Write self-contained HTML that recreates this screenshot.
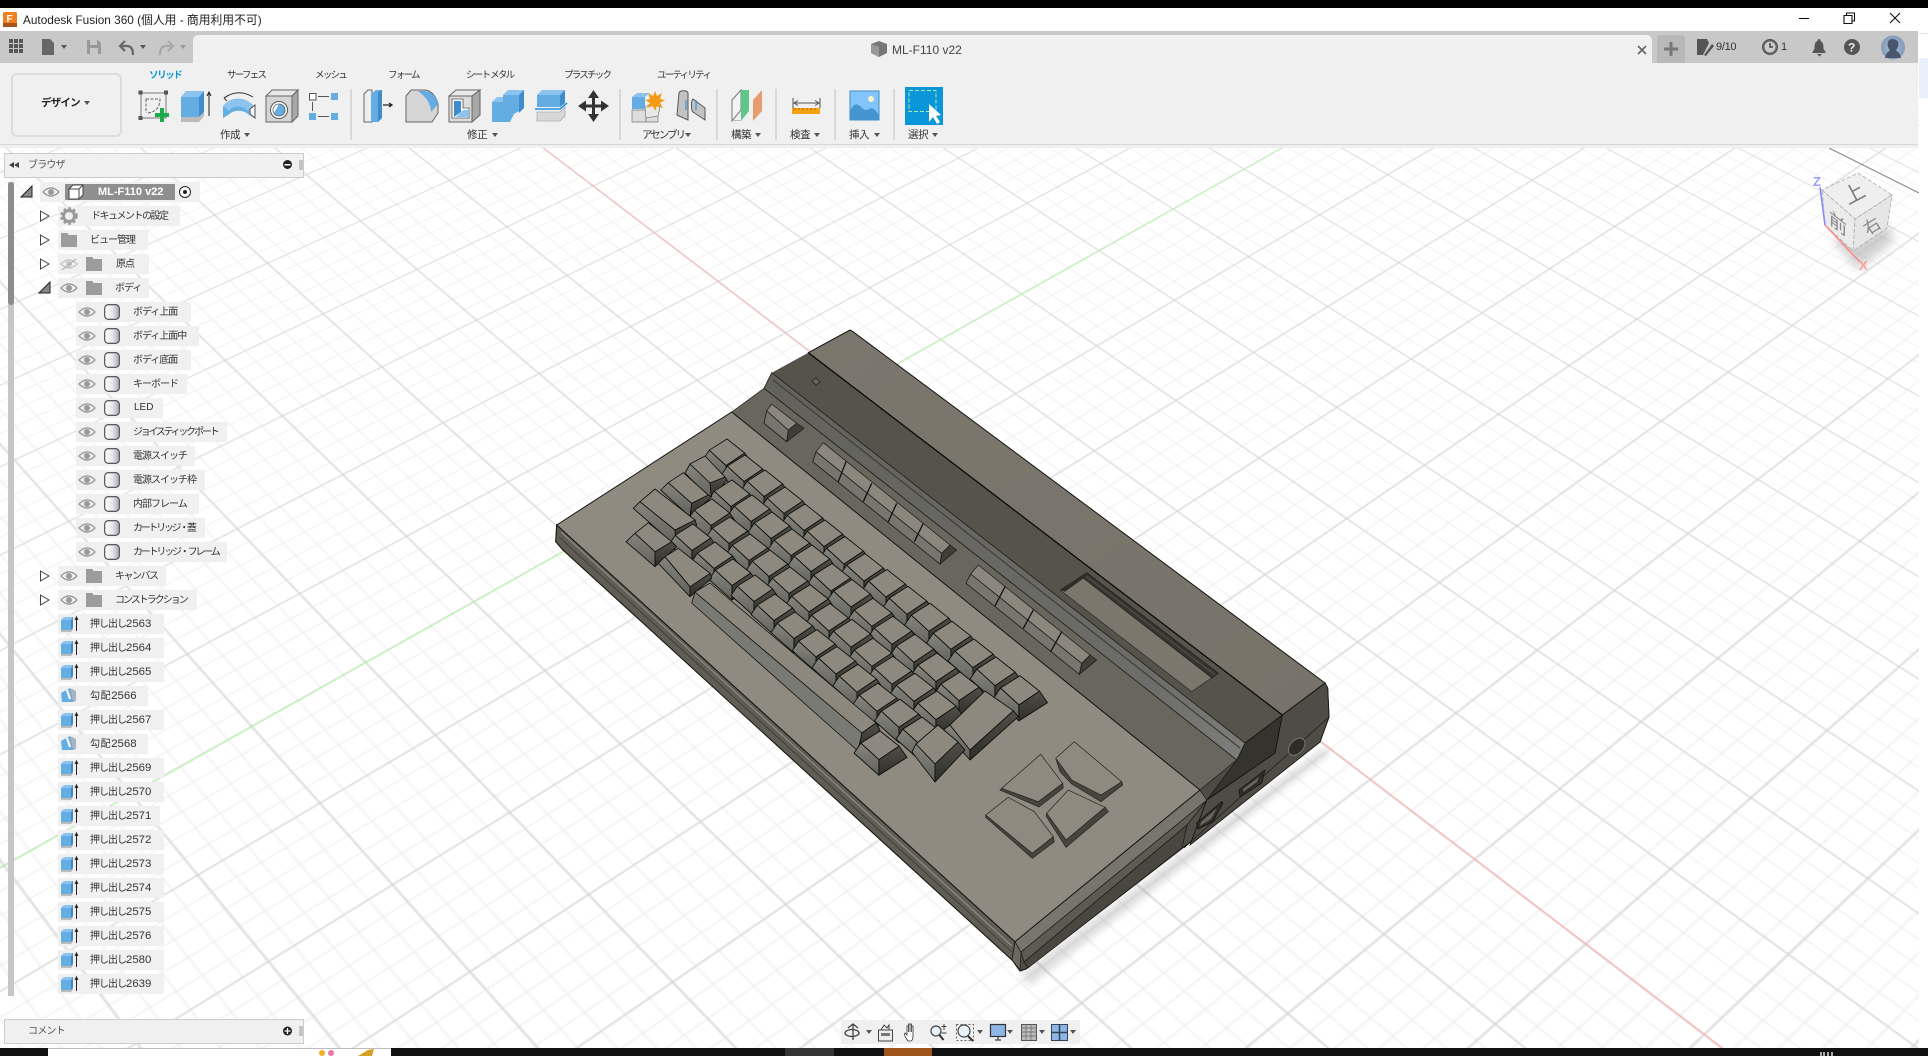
<!DOCTYPE html>
<html lang="ja"><head><meta charset="utf-8"><title>Autodesk Fusion 360</title>
<style>
html,body{margin:0;padding:0;background:#fff;width:1928px;height:1056px;overflow:hidden}
body{position:relative;font-family:"Liberation Sans","Noto Sans CJK JP",sans-serif;color:#333}
.abs{position:absolute;left:0;top:0}
#view::before{content:"";position:absolute;left:0;top:0;width:2200px;height:2200px;transform-origin:0 0;
transform:matrix3d(.506,.4548,0,-.000256,1.066,-.3964,0,.000233,0,0,1,0,-716,328.6,0,1.023);
background-image:linear-gradient(#ffa4a4,#ffa4a4),linear-gradient(#a6fb98,#a6fb98),linear-gradient(to right,#d2d2d2 1px,transparent 1px),linear-gradient(to bottom,#d2d2d2 1px,transparent 1px),linear-gradient(to right,#eeeeee 1px,transparent 1px),linear-gradient(to bottom,#eeeeee 1px,transparent 1px);
background-size:2200px .9px,.9px 2200px,100px 100px,100px 100px,20px 20px,20px 20px;
background-position:0 999.6px,999.6px 0,-.5px -.5px,-.5px -.5px,-.5px -.5px,-.5px -.5px;
background-repeat:no-repeat,no-repeat,repeat,repeat,repeat,repeat}
.b{position:absolute}
.t{position:absolute;white-space:nowrap;line-height:14px}
.tab{font-size:9.5px;letter-spacing:-1.75px;top:69px;color:#333}
.lab{font-size:10.5px;top:128px;color:#333;letter-spacing:-.4px}
.r{position:absolute;height:20px;background:#f0f0f0;font-size:10px;line-height:20px;letter-spacing:-1px;white-space:nowrap;color:#333;box-sizing:border-box}
.r.j{line-height:22px}
.r b{font:400 11.4px/20px "Liberation Sans",sans-serif;letter-spacing:0}
.kt{fill:#8d897e;stroke:#0f0f0a;stroke-width:.85;stroke-linejoin:round}
.kl{fill:url(#gl);stroke:#0f0f0a;stroke-width:.85;stroke-linejoin:round}
.kr{fill:url(#gr);stroke:#0f0f0a;stroke-width:.85;stroke-linejoin:round}
.ft{fill:#8b877c;stroke:#1a1a15;stroke-width:.7}
.ff{fill:#76756e;stroke:#1a1a15;stroke-width:.8}
.fe{fill:#3f3e38;stroke:#1a1a15;stroke-width:.7}
.sep{stroke:#111;stroke-width:1.3}
.dp{fill:#8e8a7f;stroke:#26251f;stroke-width:.7}
.ds{fill:#47453e;stroke:#26251f;stroke-width:.7}
</style></head><body>

<!-- viewport grid -->
<div id="view" class="abs" style="width:1919px;height:1048px;overflow:hidden;background:#fff">
<svg class="abs" width="1919" height="1048" viewBox="0 0 1919 1048">
<defs>
<linearGradient id="gl" x1="0" y1="0" x2="0" y2="1"><stop offset="0" stop-color="#85857e"/><stop offset="1" stop-color="#62625c"/></linearGradient>
<linearGradient id="gr" x1="0" y1="0" x2="0" y2="1"><stop offset="0" stop-color="#504f49"/><stop offset="1" stop-color="#2f2e2a"/></linearGradient>
<linearGradient id="strip" x1="0" y1="0" x2="1" y2="1"><stop offset="0" stop-color="#62615b"/><stop offset=".8" stop-color="#6c6c6a"/><stop offset="1" stop-color="#7e7e7c"/></linearGradient>
<linearGradient id="plate" x1="0" y1="0" x2="1" y2="1"><stop offset="0" stop-color="#7b776d"/><stop offset="1" stop-color="#77736a"/></linearGradient>
<filter id="bl" x="-20%" y="-20%" width="140%" height="140%"><feGaussianBlur stdDeviation="3.5"/></filter>
<filter id="bl2" x="-40%" y="-40%" width="180%" height="180%"><feGaussianBlur stdDeviation="5"/></filter>
<g id="k">
<polygon class="kl" points="-17.7,-1.8 -1,13.5 -1,28 -24,7.5"/>
<polygon class="kr" points="-1,13.5 17.7,1 25,11.5 -1,28"/>
<polygon class="kt" points="-17.7,-1.8 0,-13 17.7,1 -1,13.5"/>
</g>
</defs>

<!-- far boundary line -->
<line x1="1829" y1="148" x2="1919" y2="193" stroke="#8a8a8a" stroke-width="1.2"/>

<!-- shadow -->
<polygon points="1020,974 1322,748 1332,752 1030,986" fill="#000" opacity=".12" filter="url(#bl)"/>

<!-- side walls -->
<polygon points="556.7,525 555.7,541.7 563,550 1012,960 1020,971 1026,969 1320,742 1329,717 1327.7,688 1325,683 1282,715 1200,790 1015,941.7" fill="#4f4d45" stroke="#111" stroke-width="1"/>
<polygon points="556.7,525 555.7,541.7 563,550 1012,960 1015,941.7" fill="#5f5d54" stroke="#161611" stroke-width="1"/>
<line x1="561" y1="532" x2="1012" y2="946" stroke="#8d8b80" stroke-width="1.2"/>
<line x1="559" y1="537" x2="1012" y2="952" stroke="#3a3933" stroke-width=".8"/>
<!-- front-right band -->
<polygon points="1015,941.7 1200,790 1207,800 1021,952" fill="#78766c" stroke="#1a1a15" stroke-width=".7"/>
<polygon points="1021,952 1207,800 1187,825 1024,962" fill="#5c5a51" stroke="#1a1a15" stroke-width=".7"/>
<polygon points="1024,962 1187,825 1182,848 1028,968" fill="#49473f" stroke="#1a1a15" stroke-width=".7"/>
<polygon points="1015,941.7 1021,952 1020,970 1012,960" fill="#6b695f" stroke="#1a1a15" stroke-width=".7"/>
<!-- right block wall -->
<polygon points="1282.3,715 1325,683 1327.7,688 1329,717 1320,742 1190,845 1206.7,800 1275,753" fill="#4e4c44" stroke="#111" stroke-width=".8"/>
<line x1="1184" y1="848" x2="1329" y2="717" stroke="#1b1b16" stroke-width=".7"/>

<!-- top plate -->
<polygon points="808.3,352.7 850,330 853,331.7 1325,683 1282.3,715" fill="url(#plate)" stroke="#14140f" stroke-width="1"/>
<!-- dark band -->
<polygon points="771.7,372.7 808.3,352.7 1282.3,715 1245,743" fill="#56534b"/>
<line x1="808.3" y1="352.7" x2="1282.3" y2="715" stroke="#0c0c08" stroke-width="1.3"/>
<!-- end face of dark band -->
<polygon points="1245,743 1282.3,715 1275,753 1206.7,800 1236.7,760" fill="#35332d" stroke="#111" stroke-width=".8"/>
<!-- strip -->
<polygon points="764,388.3 771.7,372.7 1245,743 1236.7,760" fill="url(#strip)" stroke="#1c1c17" stroke-width=".8"/>
<line x1="773" y1="380" x2="1240" y2="748" stroke="#3f3e38" stroke-width="1.2"/>
<!-- mid band -->
<polygon points="731.7,412 764,388.3 1236.7,760 1200,790" fill="#69665d" stroke="#1c1c17" stroke-width=".7"/>
<!-- main plane -->
<polygon points="556.7,525 731.7,412 1200,790 1015,941.7" fill="#8f8b80" stroke="#14140f" stroke-width="1"/>
<polygon points="1200,790 1236.7,760 1206.7,800" fill="#4d4b43" stroke="#1c1c17" stroke-width=".6"/>

<!-- LED -->
<polygon points="812,381 816,378 820,382 816,385" fill="#6a675f" stroke="#1a1a15" stroke-width=".7"/>

<!-- cartridge slot -->
<polygon points="1060,590 1086.7,572.7 1218.3,673.3 1191.7,691.7" fill="#7b776d" stroke="#2b2a24" stroke-width=".7"/>
<polygon points="1086.7,572.7 1218.3,673.3 1212,678 1083,578" fill="#37352f" stroke="#1a1a15" stroke-width=".6"/>
<line x1="1086" y1="576" x2="1215" y2="675" stroke="#5a584f" stroke-width=".8"/>
<polygon points="1060,590 1086.7,572.7 1084,578 1065,591.7" fill="#2e2d28"/>

<!-- single function key -->
<polygon class="fe" points="796.7,423.3 804,428.3 786.7,441.7 788.3,430"/>
<polygon class="ff" points="766.7,410.7 788.3,430 786.7,441.7 764,423.3"/>
<polygon class="ft" points="771.7,404 796.7,423.3 788.3,430 766.7,410.7"/>

<!-- function group 1 -->
<polygon class="fe" points="950,545 956.7,550 940,564 941.7,553.3"/>
<polygon class="ff" points="816,451.7 941.7,553.3 940,564 812.7,461.7"/>
<polygon class="ft" points="823.3,442.7 950,545 941.7,553.3 816,451.7"/>
<line class="sep" x1="846" y1="461.7" x2="838.3" y2="481.7"/><line class="sep" x1="871.7" y1="483.3" x2="863.3" y2="501.7"/><line class="sep" x1="896.7" y1="503.3" x2="888.3" y2="521.7"/><line class="sep" x1="923.3" y1="523.3" x2="914.3" y2="541.7"/>
<!-- function group 2 -->
<polygon class="fe" points="1090,655 1096.7,660 1079.3,674.3 1081.7,663.3"/>
<polygon class="ff" points="970.7,574 1081.7,663.3 1079.3,674.3 966,583.3"/>
<polygon class="ft" points="978.3,565 1090,655 1081.7,663.3 970.7,574"/>
<line class="sep" x1="1005" y1="586.7" x2="995" y2="606"/><line class="sep" x1="1033.3" y1="610" x2="1023.3" y2="628.3"/><line class="sep" x1="1061.7" y1="631.7" x2="1050.7" y2="651.7"/>

<!-- Row 1 -->
<use href="#k" transform="translate(727 452)"/><use href="#k" transform="translate(745 468)"/><use href="#k" transform="translate(765 483)"/><use href="#k" transform="translate(785 500)"/><use href="#k" transform="translate(805 517)"/><use href="#k" transform="translate(825 533)"/><use href="#k" transform="translate(845 550) scale(1.04)"/><use href="#k" transform="translate(865 567) scale(1.04)"/><use href="#k" transform="translate(887 583) scale(1.04)"/><use href="#k" transform="translate(908 600) scale(1.06)"/><use href="#k" transform="translate(930 617) scale(1.06)"/><use href="#k" transform="translate(952 635) scale(1.06)"/><use href="#k" transform="translate(974 653) scale(1.08)"/><use href="#k" transform="translate(996 671) scale(1.08)"/><use href="#k" transform="translate(1020 690) scale(1.1)"/>
<!-- Row 2 -->
<polygon class="kl" points="690,464 710,483 711.7,500 685,473"/><polygon class="kr" points="710,483 725,477 727,480 711.7,500"/><polygon class="kt" points="690,464 705,456 725,477 710,483"/>
<use href="#k" transform="translate(732 493)"/><use href="#k" transform="translate(752 508)"/><use href="#k" transform="translate(772 525)"/><use href="#k" transform="translate(792 542)"/><use href="#k" transform="translate(812 558)"/><use href="#k" transform="translate(832 577) scale(1.04)"/><use href="#k" transform="translate(852 593) scale(1.04)"/><use href="#k" transform="translate(873 612) scale(1.06)"/><use href="#k" transform="translate(893 630) scale(1.06)"/><use href="#k" transform="translate(915 648) scale(1.06)"/><use href="#k" transform="translate(937 667) scale(1.08)"/><use href="#k" transform="translate(960 686) scale(1.08)"/>
<!-- Row 3 -->
<polygon class="kl" points="668.3,482.7 691.7,503.3 690,516.7 660.7,490"/><polygon class="kr" points="691.7,503.3 708.3,495 711.7,496.7 690,516.7"/><polygon class="kt" points="668.3,482.7 683.3,472.7 708.3,495 691.7,503.3"/>
<use href="#k" transform="translate(712 512)"/><use href="#k" transform="translate(730 530)"/><use href="#k" transform="translate(750 547)"/><use href="#k" transform="translate(770 563)"/><use href="#k" transform="translate(790 580)"/><use href="#k" transform="translate(810 598) scale(1.03)"/><use href="#k" transform="translate(830 617) scale(1.04)"/><use href="#k" transform="translate(852 633) scale(1.05)"/><use href="#k" transform="translate(873 652) scale(1.06)"/><use href="#k" transform="translate(893 670) scale(1.06)"/><use href="#k" transform="translate(915 687) scale(1.06)"/><use href="#k" transform="translate(937 705) scale(1.08)"/>
<!-- Enter -->
<polygon class="kl" points="950,725 970,750 970,760 943,730"/><polygon class="kr" points="970,750 1013.3,710.7 1018.3,716.7 970,760"/><polygon class="kt" points="950,725 985,691 1013.3,710.7 970,750"/>
<!-- Row 4 -->
<polygon class="kl" points="640,501.7 675,530 676.7,546.7 633.3,508.3"/><polygon class="kr" points="675,530 695,520 696.7,525 676.7,546.7"/><polygon class="kt" points="640,501.7 655,489 695,520 675,530"/>
<use href="#k" transform="translate(693 537)"/><use href="#k" transform="translate(715 555)"/><use href="#k" transform="translate(733 572)"/><use href="#k" transform="translate(755 588)"/><use href="#k" transform="translate(775 607)"/><use href="#k" transform="translate(795 625)"/><use href="#k" transform="translate(817 643) scale(1.03)"/><use href="#k" transform="translate(837 660) scale(1.04)"/><use href="#k" transform="translate(858 678) scale(1.05)"/><use href="#k" transform="translate(878 697) scale(1.06)"/><use href="#k" transform="translate(900 713) scale(1.06)"/><use href="#k" transform="translate(922 731) scale(1.08)"/>
<!-- Row 5 -->
<polygon class="kl" points="635,533.3 655,551.7 655,566.7 626,541.7"/><polygon class="kr" points="655,551.7 671.7,541.7 676.7,546.7 655,566.7"/><polygon class="kt" points="635,533.3 648.3,522.7 671.7,541.7 655,551.7"/>
<polygon class="kl" points="665,556.7 690,586.7 690,596.7 658.3,563.3"/><polygon class="kr" points="690,586.7 710,573.3 711.7,578.3 690,596.7"/><polygon class="kt" points="665,556.7 678.3,548.3 710,573.3 690,586.7"/>
<!-- space bar -->
<polygon points="695,592 862,733 858,751 691.7,603" fill="#7a7a74" stroke="#16160f" stroke-width=".8"/>
<polygon points="710,583 876,723 862,733 695,592" fill="#8c887d" stroke="#16160f" stroke-width=".8"/>
<polygon class="kr" points="862,733 876,723 880,730 858,751"/>
<use href="#k" transform="translate(880 745) scale(1.08)"/>
<polygon class="kl" points="916,744 935,764 935,782 912,752"/><polygon class="kr" points="935,764 958,742 965,750 935,782"/><polygon class="kt" points="916,744 938,725 958,742 935,764"/>

<!-- D pad -->
<polygon class="ds" points="1001.7,788.3 1038.3,801.7 1062.7,783.3 1063.3,788 1039,807 1000,790"/><polygon class="dp" points="1001.7,788.3 1040.7,754.3 1062.7,783.3 1038.3,801.7"/>
<polygon class="ds" points="1055.7,758.3 1071.7,780 1101,795 1121.7,781.7 1122.7,785 1101,801.7 1071.7,784 1060,771.7"/><polygon class="dp" points="1055.7,758.3 1074.3,741.7 1121.7,781.7 1101,795 1071.7,780"/>
<polygon class="ds" points="985.7,815 1032.3,853.3 1053.3,836.7 1054.3,841.7 1032.3,858.3 985.7,817.3"/><polygon class="dp" points="985.7,815 1008.3,797.3 1034.3,811.7 1053.3,836.7 1032.3,853.3"/>
<polygon class="ds" points="1046.7,813.3 1066,840 1105,807.3 1108.3,811.7 1066,847.3 1046,816"/><polygon class="dp" points="1046.7,813.3 1068.3,790 1105,807.3 1066,840"/>

<!-- ports -->
<polygon points="1196.7,823 1221.7,801.7 1223,803 1213,821.7 1198,829" fill="#2e2d27" stroke="#111" stroke-width=".7"/>
<polygon points="1201,822 1217,808 1211,819 1200,826" fill="#67655c"/>
<polygon points="1239,790 1265,770 1261.7,783 1240,797" fill="#2e2d27" stroke="#111" stroke-width=".7"/>
<polygon points="1243,789 1259,777 1257,782 1243,792" fill="#67655c"/>
<ellipse cx="1296.7" cy="746.7" rx="10" ry="6.5" transform="rotate(-48 1296.7 746.7)" fill="#2e2d27" stroke="#77756b"/>

<!-- view cube -->
<polygon points="1833,240 1880,215 1895,240 1858,270" fill="#000" opacity=".18" filter="url(#bl2)"/>
<polygon points="1858,173 1892,195 1855,219 1822,190" fill="#efefef" stroke="#aaa" stroke-dasharray="4 2" stroke-width=".8"/>
<polygon points="1822,190 1855,219 1853,251 1825,225" fill="#ebebeb" stroke="#aaa" stroke-dasharray="4 2" stroke-width=".8"/>
<polygon points="1892,195 1855,219 1853,251 1887,228" fill="#e6e6e6" stroke="#aaa" stroke-dasharray="4 2" stroke-width=".8"/>
<text x="1844" y="200" font-size="21" fill="#7c7c7c" transform="rotate(-28 1856 194)" font-family="'Noto Sans CJK JP',sans-serif">上</text>
<text x="1829" y="228" font-size="18" fill="#858585" transform="skewY(38) translate(0 -1434) " font-family="'Noto Sans CJK JP',sans-serif">前</text>
<text x="1863" y="233" font-size="17" fill="#858585" font-family="'Noto Sans CJK JP',sans-serif" transform="rotate(-32 1870 226)">右</text>
<line x1="1825" y1="225" x2="1820" y2="187" stroke="#8a8aff" stroke-width="1.6"/>
<line x1="1825" y1="225" x2="1860" y2="262" stroke="#ff8a8a" stroke-width="1.6"/>
<text x="1813" y="186" font-size="13" font-weight="700" fill="#9a9aff" font-family="Liberation Sans,sans-serif">Z</text>
<text x="1859" y="270" font-size="13" font-weight="700" fill="#ff9a9a" font-family="Liberation Sans,sans-serif">X</text>
</svg>
</div>

<!-- chrome backgrounds -->
<div class="b" style="left:0;top:0;width:1928px;height:8px;background:#000"></div>
<div class="b" style="left:0;top:8px;width:1928px;height:23px;background:#fff"></div>
<div class="b" style="left:0;top:31px;width:1918px;height:32px;background:#c8c8c8"></div>
<div class="b" style="left:193px;top:35px;width:1459px;height:30px;background:#f0f0f0;border-radius:5px 5px 0 0"></div>
<div class="b" style="left:1657px;top:35px;width:28px;height:28px;background:#b8b8b8;border-radius:4px 4px 0 0"></div>
<div class="b" style="left:0;top:63px;width:1918px;height:85px;background:#f0f0f0"></div>
<div class="b" style="left:0;top:144px;width:1918px;height:1px;background:#d6d6d6"></div>
<div class="b" style="left:1919px;top:8px;width:9px;height:1040px;background:#fff"></div>
<div class="b" style="left:1919px;top:33px;width:9px;height:1px;background:#ddd"></div>
<div class="b" style="left:1919px;top:58px;width:9px;height:40px;background:#e9effb"></div>
<div class="b" style="left:11px;top:73px;width:107px;height:60px;border:2px solid #dcdcdc;border-radius:6px"></div>

<!-- title -->
<div class="t" style="left:23px;top:13px;font-size:11.8px;color:#222">Autodesk Fusion 360 (個人用 - 商用利用不可)</div>
<div class="t" style="left:892px;top:43px;font-size:12px;color:#444">ML-F110 v22</div>
<div class="t" style="left:1716px;top:40px;font-size:11px;letter-spacing:-.3px;color:#333">9/10</div>
<div class="t" style="left:1781px;top:40px;font-size:11px;color:#333">1</div>
<div class="t" style="left:41px;top:96px;font-size:10.5px;font-weight:700;letter-spacing:-.8px;color:#222">デザイン</div>

<!-- ribbon tabs -->
<div class="t tab" style="left:149px;color:#0696d7;font-weight:700;letter-spacing:-1.4px">ソリッド</div>
<div class="t tab" style="left:227px">サーフェス</div>
<div class="t tab" style="left:315px">メッシュ</div>
<div class="t tab" style="left:388px">フォーム</div>
<div class="t tab" style="left:466px">シート&nbsp;メタル</div>
<div class="t tab" style="left:564px">プラスチック</div>
<div class="t tab" style="left:657px">ユーティリティ</div>

<div class="t lab" style="left:220px">作成</div>
<div class="t lab" style="left:467px">修正</div>
<div class="t lab" style="left:642px;letter-spacing:-2px">アセンブリ</div>
<div class="t lab" style="left:731px">構築</div>
<div class="t lab" style="left:790px">検査</div>
<div class="t lab" style="left:849px">挿入</div>
<div class="t lab" style="left:908px">選択</div>

<!-- browser panel -->
<div class="b" style="left:4px;top:153px;width:298px;height:23px;background:#f0f0f0;border:1px solid #ccc"></div>
<div class="t" style="left:28px;top:159px;font-size:10px;letter-spacing:-.8px;color:#555">ブラウザ</div>
<div class="b" style="left:4px;top:1019px;width:298px;height:23px;background:#f0f0f0;border:1px solid #ccc"></div>
<div class="t" style="left:28px;top:1025px;font-size:10px;letter-spacing:-.8px;color:#555">コメント</div>
<div class="b" style="left:8px;top:182px;width:6px;height:814px;background:#c6c6c6"></div>
<div class="b" style="left:8px;top:182px;width:6px;height:123px;background:#8c8c8c;border-radius:3px"></div>

<!-- tree rows -->
<div class="r" style="left:40px;top:182px;width:160px"></div>
<div class="b" style="left:65px;top:184px;width:110px;height:16px;background:#8f8f8f"></div>
<div class="t" style="left:98px;top:185px;font-size:11px;font-weight:700;color:#fff">ML-F110 v22</div>
<div class="r j" style="left:58px;top:206px;width:122px;padding-left:33px;letter-spacing:-1.5px">ドキュメントの設定</div>
<div class="r j" style="left:58px;top:230px;width:90px;padding-left:32px">ビュー管理</div>
<div class="r j" style="left:58px;top:254px;width:91px;padding-left:58px">原点</div>
<div class="r j" style="left:58px;top:278px;width:91px;padding-left:57px">ボディ</div>
<div class="r j" style="left:76px;top:302px;width:115px;padding-left:57px">ボディ上面</div>
<div class="r j" style="left:76px;top:326px;width:123px;padding-left:57px">ボディ上面中</div>
<div class="r j" style="left:76px;top:350px;width:115px;padding-left:57px">ボディ底面</div>
<div class="r j" style="left:76px;top:374px;width:111px;padding-left:57px">キーボード</div>
<div class="r" style="left:76px;top:398px;width:87px;padding-left:58px"><b style="font-size:10px">LED</b></div>
<div class="r j" style="left:76px;top:422px;width:151px;padding-left:57px;letter-spacing:-2.3px">ジョイスティック ポート</div>
<div class="r j" style="left:76px;top:446px;width:119px;padding-left:57px">電源スイッチ</div>
<div class="r j" style="left:76px;top:470px;width:129px;padding-left:57px">電源スイッチ枠</div>
<div class="r j" style="left:76px;top:494px;width:123px;padding-left:57px">内部フレーム</div>
<div class="r j" style="left:76px;top:518px;width:129px;padding-left:57px;letter-spacing:-2.3px">カートリッジ・蓋</div>
<div class="r j" style="left:76px;top:542px;width:151px;padding-left:57px;letter-spacing:-2.2px">カートリッジ・フレーム</div>
<div class="r j" style="left:58px;top:566px;width:108px;padding-left:57px;letter-spacing:-1.5px">キャンバス</div>
<div class="r j" style="left:58px;top:590px;width:139px;padding-left:57px;letter-spacing:-2px">コンストラクション</div>
<div class="r" style="left:58px;top:614px;width:106px;padding-left:32px">押し出し<b>2563</b></div>
<div class="r" style="left:58px;top:638px;width:106px;padding-left:32px">押し出し<b>2564</b></div>
<div class="r" style="left:58px;top:662px;width:106px;padding-left:32px">押し出し<b>2565</b></div>
<div class="r" style="left:58px;top:686px;width:90px;padding-left:32px;letter-spacing:.6px">勾配<b>2566</b></div>
<div class="r" style="left:58px;top:710px;width:106px;padding-left:32px">押し出し<b>2567</b></div>
<div class="r" style="left:58px;top:734px;width:90px;padding-left:32px;letter-spacing:.6px">勾配<b>2568</b></div>
<div class="r" style="left:58px;top:758px;width:106px;padding-left:32px">押し出し<b>2569</b></div>
<div class="r" style="left:58px;top:782px;width:106px;padding-left:32px">押し出し<b>2570</b></div>
<div class="r" style="left:58px;top:806px;width:102px;padding-left:32px">押し出し<b>2571</b></div>
<div class="r" style="left:58px;top:830px;width:106px;padding-left:32px">押し出し<b>2572</b></div>
<div class="r" style="left:58px;top:854px;width:106px;padding-left:32px">押し出し<b>2573</b></div>
<div class="r" style="left:58px;top:878px;width:106px;padding-left:32px">押し出し<b>2574</b></div>
<div class="r" style="left:58px;top:902px;width:106px;padding-left:32px">押し出し<b>2575</b></div>
<div class="r" style="left:58px;top:926px;width:106px;padding-left:32px">押し出し<b>2576</b></div>
<div class="r" style="left:58px;top:950px;width:106px;padding-left:32px">押し出し<b>2580</b></div>
<div class="r" style="left:58px;top:974px;width:106px;padding-left:32px">押し出し<b>2639</b></div>

<!-- nav bar -->
<div class="b" style="left:841px;top:1020px;width:239px;height:24px;background:#f0f0f0"></div>

<!-- taskbar -->
<div class="b" style="left:0;top:1048px;width:1928px;height:8px;background:#111"></div>
<div class="b" style="left:48px;top:1048px;width:343px;height:8px;background:#fff;border-top:1px solid #bbb;box-sizing:border-box"></div>
<div class="b" style="left:785px;top:1048px;width:49px;height:8px;background:#333"></div>
<div class="b" style="left:884px;top:1048px;width:48px;height:8px;background:#9c5418"></div>

<!-- icon layer -->
<svg class="abs" width="1928" height="1056" viewBox="0 0 1928 1056" style="pointer-events:none">
<defs>
<linearGradient id="bd" x1="0" y1="0" x2="1" y2="0"><stop offset="0" stop-color="#fff"/><stop offset=".55" stop-color="#e6e6ea"/><stop offset="1" stop-color="#a5a8b4"/></linearGradient>
<radialGradient id="av" cx=".5" cy=".5" r=".6"><stop offset="0" stop-color="#a9bdd8"/><stop offset="1" stop-color="#7d93b3"/></radialGradient>
<g id="eye"><path d="M0 5Q8 -3 16 5Q8 13 0 5Z" fill="none" stroke="#9a9a9a" stroke-width="1.3"/><circle cx="8" cy="5" r="3" fill="#9a9a9a"/></g>
<g id="body"><rect x=".7" y=".7" width="14.6" height="14.6" rx="3.5" fill="url(#bd)" stroke="#444" stroke-width="1.1"/></g>
<g id="folder"><path d="M0 0h6l2 2h8v12H0z" fill="#9c9c9c"/></g>
<g id="ex"><polygon points="0,4 3,1 12,1 12,12 10,14 0,14" fill="#64ade3"/><polygon points="0,4 3,1 12,1 10,4" fill="#8cc4ef"/><polygon points="10,4 12,1 12,12 10,14" fill="#3e8ccb"/><polygon points="0,14 10,14 12,12 12,14 10,16 0,16" fill="#bbb"/><path d="M15.5 15V2M14 4l1.5-3 1.5 3" fill="none" stroke="#222" stroke-width="1"/></g>
<g id="dr"><polygon points="0,5 9,0 13,5 12,14 1,14" fill="#64ade3"/><path d="M6 2l3 9" stroke="#fff" stroke-width="2"/><polygon points="9,0 15,3 15,13 12,14" fill="#aab4c0"/></g>
<polygon id="dn" points="0,0 6,0 3,4" fill="#555"/>
</defs>

<!-- title bar icons -->
<rect x="3" y="12" width="14" height="15" rx="1.5" fill="#f08020"/><rect x="3" y="23" width="14" height="4" fill="#a85518"/>
<text x="6.5" y="22" font-size="10" font-weight="700" fill="#fff" font-family="Liberation Sans,sans-serif">F</text>
<path d="M1799 18.5h10" stroke="#111" stroke-width="1.1"/>
<path d="M1844 15.5h8v8h-8zM1846.5 15.5v-2.5h8v8h-2.5" fill="none" stroke="#111" stroke-width="1.1"/>
<path d="M1890 13l10 10M1900 13l-10 10" stroke="#111" stroke-width="1.1"/>

<!-- quick access -->
<g fill="#555"><rect x="9" y="39" width="4" height="4"/><rect x="14" y="39" width="4" height="4"/><rect x="19" y="39" width="4" height="4"/><rect x="9" y="44" width="4" height="4"/><rect x="14" y="44" width="4" height="4"/><rect x="19" y="44" width="4" height="4"/><rect x="9" y="49" width="4" height="4"/><rect x="14" y="49" width="4" height="4"/><rect x="19" y="49" width="4" height="4"/></g>
<path d="M42 39h8l4 4v12H42z" fill="#666"/><use href="#dn" x="61" y="45"/>
<path d="M87 40h11l3 3v11H87z" fill="#999"/><rect x="90" y="40" width="7" height="5" fill="#c8c8c8"/><rect x="90" y="48" width="8" height="6" fill="#c8c8c8"/>
<path d="M125 41l-5 5 5 5M120 46h7c4 0 6 3 6 9" fill="none" stroke="#666" stroke-width="2.2"/><use href="#dn" x="140" y="45"/>
<path d="M168 41l5 5-5 5M173 46h-7c-4 0-6 3-6 9" fill="none" stroke="#a8a8a8" stroke-width="2.2"/><polygon points="180,45 186,45 183,49" fill="#999"/>

<polygon points="871,44 879,41 887,44 887,53 879,57 871,53" fill="#777"/><polygon points="871,44 879,47 879,57 871,53" fill="#9a9a9a"/>
<path d="M1638 46l8 8M1646 46l-8 8" stroke="#666" stroke-width="1.6"/>
<path d="M1671 42v14M1664 49h14" stroke="#777" stroke-width="3"/>
<path d="M1697 39h10l2 4-6 12h-6z" fill="#555"/><path d="M1704 55l8-11 2 2-8 10z" fill="#555"/>
<circle cx="1770" cy="47" r="7.5" fill="#666" stroke="#555"/><circle cx="1770" cy="47" r="5.5" fill="#ccc"/><path d="M1770 43v4h3" stroke="#444" stroke-width="1.5" fill="none"/>
<path d="M1819 39c1 0 1.500 1 1.500 2 3 1 3 5 3 8l2 3v1h-13v-1l2-3c0-3 0-7 3-8 0-1 .5-2 1.500-2z" fill="#555"/><path d="M1817 54h5l-2.500 2.500z" fill="#555"/>
<circle cx="1852" cy="47" r="8" fill="#555"/><text x="1848" y="51.500" font-size="12" font-weight="700" fill="#eee" font-family="Liberation Sans,sans-serif">?</text>
<ellipse cx="1893" cy="47.500" rx="12" ry="12" fill="url(#av)"/><path d="M1885 58c1-6 4-6 5-8-2-2-3-5-2-8 1-4 8-4 10 0 1 3 0 6-2 8 1 2 4 2 5 8z" fill="#4a566e"/>

<use href="#dn" x="84" y="101"/>

<!-- sketch -->
<rect x="141" y="93" width="25" height="25" fill="none" stroke="#777" stroke-width="1"/><g fill="#555"><rect x="138.500" y="90.500" width="4" height="4"/><rect x="164" y="90.500" width="4" height="4"/><rect x="138.500" y="116" width="4" height="4"/></g>
<path d="M146 99h14c0 8-4 13-12 14M146 99v14" fill="none" stroke="#666" stroke-dasharray="3 1.500"/>
<path d="M162 108v14M155 115h14" stroke="#1ea94a" stroke-width="4"/>
<!-- extrude -->
<polygon points="181,97 199,97 199,117 181,117" fill="#64ade3"/><polygon points="181,97 186,91 204,91 199,97" fill="#8cc4ef"/><polygon points="199,97 204,91 204,112 199,117" fill="#3e8ccb"/><polygon points="181,117 199,117 204,112 204,116 199,122 181,122" fill="#bbb"/>
<path d="M209 116V92M207 96l2-4 2 4" fill="none" stroke="#222" stroke-width="1"/>
<!-- revolve -->
<path d="M223 107C229 96 247 96 254 107L254 118 248 114C242 109 233 110 228 115L223 118Z" fill="#64ade3"/><path d="M223 106C230 97 246 97 254 106L248 111C242 105 233 105 229 111Z" fill="#8cc4ef"/><polygon points="250,109 255,105 255,118 250,114" fill="#f4f4f4" stroke="#555"/>
<path d="M224 98Q238 88 253 97" fill="none" stroke="#333"/><path d="M224 98l5-3M224 98l3 3" stroke="#333"/>
<!-- hole -->
<polygon points="266,96 292,96 292,122 266,122" fill="#d5d5d5" stroke="#666"/><polygon points="266,96 272,90 298,90 292,96" fill="#e9e9e9" stroke="#666"/><polygon points="292,96 298,90 298,116 292,122" fill="#a8a8a8" stroke="#666"/>
<circle cx="279" cy="110" r="8.500" fill="#fff" stroke="#555"/><path d="M279 104a6 6 0 1 1-5 9z" fill="#64ade3"/><circle cx="279" cy="110" r="6" fill="none" stroke="#555" stroke-width=".8"/>
<!-- pattern -->
<rect x="309.500" y="93.500" width="6.500" height="6.500" fill="#fff" stroke="#555"/><rect x="331" y="93" width="7" height="7" fill="#64ade3"/><rect x="309" y="113" width="7" height="7" fill="#64ade3"/><rect x="331" y="113" width="7" height="7" fill="#64ade3"/>
<path d="M318 96.500h11M312.500 102v9M318 116.500h11" stroke="#555"/>
<line x1="351" y1="89" x2="351" y2="140" stroke="#d8d8d8" stroke-width="2"/>
<!-- press pull -->
<polygon points="364,94 368,90 372,90 372,122 364,122" fill="#eee" stroke="#666"/><polygon points="371,122 371,94 376,90 382,90 382,118 378,122" fill="#64ade3"/><polygon points="378,122 378,92 382,90 382,118" fill="#3e8ccb"/>
<path d="M383 105h9M389 103l3 2-3 2" fill="none" stroke="#222" stroke-width="1.300"/>
<!-- fillet -->
<path d="M406 96l5-6h13c7 0 12 6 14 14v9l-6 9h-26z" fill="#d5d5d5" stroke="#666"/><path d="M418 91h6c7 0 13 6 14 13l-7 8c0-9-6-16-13-21z" fill="#64ade3"/>
<!-- chamfer -->
<polygon points="449,96 472,96 472,122 449,122" fill="#ddd" stroke="#666"/><polygon points="449,96 456,90 480,90 472,96" fill="#e9e9e9" stroke="#666"/><polygon points="472,96 480,90 480,115 472,122" fill="#a8a8a8" stroke="#666"/>
<polygon points="452,99 463,99 463,108 469,108 469,118 452,118" fill="#fff" stroke="#555" stroke-width=".8"/><polygon points="454,101 461,101 461,112 454,117" fill="#3e8ccb"/><polygon points="456,117 463,110 469,110 469,117" fill="#8cc4ef"/>
<!-- combine -->
<polygon points="492,102 510,102 510,122 492,122" fill="#64ade3"/><polygon points="492,102 497,97 503,97 503,102" fill="#8cc4ef"/><polygon points="503,110 503,95 508,90 524,90 524,108 514,114 510,122 510,110" fill="#64ade3"/><polygon points="503,95 508,90 524,90 519,95" fill="#8cc4ef"/><polygon points="519,95 524,90 524,108 519,113" fill="#3e8ccb"/>
<!-- split -->
<polygon points="537,95 542,90 565,90 560,95" fill="#8cc4ef"/><polygon points="537,95 560,95 560,107 537,107" fill="#64ade3"/><polygon points="560,95 565,90 565,103 560,107" fill="#3e8ccb"/>
<path d="M535 109h25l7-6" fill="none" stroke="#1c8fdc" stroke-width="1.500"/>
<polygon points="537,112 560,112 565,107 565,116 560,121 537,121" fill="#d8d8d8" stroke="#999" stroke-width=".6"/>
<!-- move -->
<path d="M593.500 92v28M580 106h27" stroke="#333" stroke-width="3"/><g fill="#333"><polygon points="593.500,90 588,98 599,98"/><polygon points="593.500,122 588,114 599,114"/><polygon points="578,106 586,100.500 586,111.500"/><polygon points="609,106 601,100.500 601,111.500"/></g>
<line x1="620" y1="89" x2="620" y2="140" stroke="#d8d8d8" stroke-width="2"/>
<!-- assemble -->
<polygon points="632,97 645,97 645,109 632,109" fill="#64ade3"/><polygon points="632,97 637,93 650,93 645,97" fill="#8cc4ef"/>
<polygon points="632,110 646,110 646,122 632,122" fill="#ddd" stroke="#777" stroke-width=".7"/><polygon points="646,110 658,110 658,122 646,122" fill="#ddd" stroke="#777" stroke-width=".7"/><polygon points="645,107 652,103 660,107 658,116 646,118" fill="#e8e8e8" stroke="#777" stroke-width=".7"/>
<path d="M655 91l2 5 5-3-2 6 5 1-5 3 3 5-6-2-2 5-2-5-6 2 3-5-5-3 5-1-2-6 5 3z" fill="#f59a14"/>
<!-- joint -->
<path d="M677 115l2-22c1-3 8-3 9 0v27l-9-4z" fill="#c2c2c2" stroke="#555"/><path d="M693 99l12 9v12l-12-8c-2-1-2-12 0-13z" fill="#c2c2c2" stroke="#555"/><path d="M686 100v10M696 100v10" stroke="#1c8fdc"/>
<line x1="717" y1="89" x2="717" y2="140" stroke="#d8d8d8" stroke-width="2"/>
<!-- construct -->
<polygon points="732,100 741,90 741,110 732,121" fill="#f4f4f4" stroke="#777"/><polygon points="741,90 749,90 749,111 741,121" fill="#5ec688"/><polygon points="733,121 741,121 741,120 733,120" fill="#bbb"/><polygon points="753,100 762,90 762,111 753,121" fill="#e69c6c"/>
<line x1="776" y1="89" x2="776" y2="140" stroke="#d8d8d8" stroke-width="2"/>
<!-- inspect -->
<path d="M793 98v10M820 98v10M794 103h25M798 100.500l-4 2.500 4 2.500M815 100.500l4 2.500-4 2.500" fill="none" stroke="#555"/>
<rect x="792" y="108" width="28" height="6" fill="#f5a314"/><path d="M795 108v2M799 108v2M803 108v2M807 108v2M811 108v2M815 108v2" stroke="#a56b00"/>
<line x1="835" y1="89" x2="835" y2="140" stroke="#d8d8d8" stroke-width="2"/>
<!-- insert -->
<rect x="850" y="91" width="29" height="29" fill="#82c4fb"/><circle cx="871" cy="99" r="3" fill="#f7f3c8"/><path d="M850 120v-9c4-8 7-8 11-4 3 3 5 4 8 2 3-2 6 0 10 6v5z" fill="#4495d0"/>
<rect x="850" y="91" width="29" height="29" fill="none" stroke="#3f8ec9"/>
<line x1="894" y1="89" x2="894" y2="140" stroke="#d8d8d8" stroke-width="2"/>
<!-- select -->
<rect x="905" y="87" width="38" height="38" fill="#0a96d9"/><rect x="909" y="90.500" width="27" height="21" fill="none" stroke="#a8ecb0" stroke-dasharray="4 2"/>
<path d="M929 104v18l4-5 4 7 3-2-4-6 5-1z" fill="#fff"/>

<!-- label carets -->
<use href="#dn" x="244" y="133"/><use href="#dn" x="492" y="133"/><use href="#dn" x="685" y="133"/><use href="#dn" x="755" y="133"/><use href="#dn" x="814" y="133"/><use href="#dn" x="874" y="133"/><use href="#dn" x="932" y="133"/>

<!-- browser header icons -->
<polygon points="14,162 9,165 14,168" fill="#444"/><polygon points="19,162 14,165 19,168" fill="#444"/>
<circle cx="287.500" cy="164.500" r="4.500" fill="#222"/><rect x="284.500" y="164" width="6" height="1.500" fill="#fff"/>
<path d="M300 160v10M302 160v10" stroke="#999"/>
<circle cx="287.500" cy="1031" r="4.500" fill="#222"/><path d="M284.500 1031h6M287.500 1028v6" stroke="#fff" stroke-width="1.300"/>
<path d="M300 1026v10M302 1026v10" stroke="#999"/>

<!-- tree arrows -->
<polygon points="21,197 32,186 32,197" fill="#888" stroke="#222"/>
<polygon points="40.500,211 49,216 40.500,221" fill="#fff" stroke="#444"/>
<polygon points="40.500,235 49,240 40.500,245" fill="#fff" stroke="#444"/>
<polygon points="40.500,259 49,264 40.500,269" fill="#fff" stroke="#444"/>
<polygon points="39,293 50,282 50,293" fill="#888" stroke="#222"/>
<polygon points="40.500,571 49,576 40.500,581" fill="#fff" stroke="#444"/>
<polygon points="40.500,595 49,600 40.500,605" fill="#fff" stroke="#444"/>

<!-- root icons -->
<use href="#eye" x="43" y="187"/>
<polygon points="69,189 73,185 83,185 83,195 79,199 69,199" fill="#fff" stroke="#444"/><path d="M69 189h10v10M79 189l4-4" fill="none" stroke="#444"/>
<circle cx="185" cy="192" r="5.500" fill="#fff" stroke="#222"/><circle cx="185" cy="192" r="2" fill="#222"/>

<!-- gear -->
<circle cx="69" cy="216" r="5.500" fill="none" stroke="#999" stroke-width="3"/><circle cx="69" cy="216" r="7.500" fill="none" stroke="#999" stroke-width="2.500" stroke-dasharray="2.700 2.200"/>
<use href="#folder" x="61" y="233"/>
<use href="#eye" x="61" y="259" opacity=".5"/><path d="M62 270l14-11" stroke="#aaa"/><use href="#folder" x="86" y="257"/>
<use href="#eye" x="61" y="283"/><use href="#folder" x="86" y="281"/>

<g>
<use href="#eye" x="79" y="307"/><use href="#body" x="104" y="304"/>
<use href="#eye" x="79" y="331"/><use href="#body" x="104" y="328"/>
<use href="#eye" x="79" y="355"/><use href="#body" x="104" y="352"/>
<use href="#eye" x="79" y="379"/><use href="#body" x="104" y="376"/>
<use href="#eye" x="79" y="403"/><use href="#body" x="104" y="400"/>
<use href="#eye" x="79" y="427"/><use href="#body" x="104" y="424"/>
<use href="#eye" x="79" y="451"/><use href="#body" x="104" y="448"/>
<use href="#eye" x="79" y="475"/><use href="#body" x="104" y="472"/>
<use href="#eye" x="79" y="499"/><use href="#body" x="104" y="496"/>
<use href="#eye" x="79" y="523"/><use href="#body" x="104" y="520"/>
<use href="#eye" x="79" y="547"/><use href="#body" x="104" y="544"/>
</g>
<use href="#eye" x="61" y="571"/><use href="#folder" x="86" y="569"/>
<use href="#eye" x="61" y="595"/><use href="#folder" x="86" y="593"/>

<use href="#ex" x="61" y="616"/><use href="#ex" x="61" y="640"/><use href="#ex" x="61" y="664"/><use href="#dr" x="61" y="688"/><use href="#ex" x="61" y="712"/><use href="#dr" x="61" y="736"/><use href="#ex" x="61" y="760"/><use href="#ex" x="61" y="784"/><use href="#ex" x="61" y="808"/><use href="#ex" x="61" y="832"/><use href="#ex" x="61" y="856"/><use href="#ex" x="61" y="880"/><use href="#ex" x="61" y="904"/><use href="#ex" x="61" y="928"/><use href="#ex" x="61" y="952"/><use href="#ex" x="61" y="976"/>

<!-- nav bar icons -->
<path d="M853 1024v16M848 1028l5-4 5 4" fill="none" stroke="#444" stroke-width="1.300"/><ellipse cx="852" cy="1033" rx="7" ry="3.500" fill="none" stroke="#444" stroke-width="1.300"/><use href="#dn" x="866" y="1030"/>
<rect x="878.500" y="1030" width="14" height="11" fill="#eee" stroke="#444"/><rect x="881" y="1033" width="9" height="3" fill="#777"/><path d="M881 1030l3-5 3 3 2-3v5" fill="none" stroke="#444"/>
<path d="M908 1041c-3-4-4-7-3-8l2 2v-9h1.500v6-8h1.500v8-8h1.500v8-6h1.500v10c0 3-1 5-2 5z" fill="#fff" stroke="#333" stroke-width=".8"/>
<circle cx="936" cy="1031" r="5" fill="#e8f0f8" stroke="#444" stroke-width="1.200"/><path d="M939.500 1035l4 5" stroke="#333" stroke-width="2"/><path d="M944 1024v6M941.500 1026.500h5M941.500 1033h5" stroke="#444"/>
<rect x="956.500" y="1024.500" width="17" height="16" fill="none" stroke="#666" stroke-dasharray="2 2"/><circle cx="964" cy="1031" r="6" fill="#e8f0f8" stroke="#444" stroke-width="1.200"/><path d="M968 1036l5 5" stroke="#333" stroke-width="2"/><use href="#dn" x="977" y="1030"/>
<rect x="990.500" y="1024.500" width="15" height="12" fill="#8eb5e6" stroke="#333" stroke-width="1.200"/><path d="M995 1040h6M998 1037v3" stroke="#444" stroke-width="1.300"/><use href="#dn" x="1007" y="1030"/>
<rect x="1021.500" y="1024.500" width="15" height="16" fill="#bbb" stroke="#555"/><path d="M1021 1028h16M1021 1032h16M1021 1036h16M1026 1024v16M1031 1024v16" stroke="#666" stroke-width=".7"/><use href="#dn" x="1039" y="1030"/>
<rect x="1051.500" y="1024.500" width="16" height="16" fill="#8eb5e6" stroke="#345" stroke-width="1"/><path d="M1051 1032.500h17M1059.500 1024v16" stroke="#345" stroke-width="1.500"/><use href="#dn" x="1070" y="1030"/>

<!-- tiny taskbar bits -->
<circle cx="322" cy="1053" r="3" fill="#f0b020"/><circle cx="331" cy="1053" r="3" fill="#e878a8"/><path d="M358 1056l10-6 6-1-2 7z" fill="#d8a020"/>
<path d="M1821 1056v-4M1824 1056v-4M1828 1056v-4M1832 1056v-4" stroke="#ddd" stroke-width="1.500"/>
</svg>
</body></html>
